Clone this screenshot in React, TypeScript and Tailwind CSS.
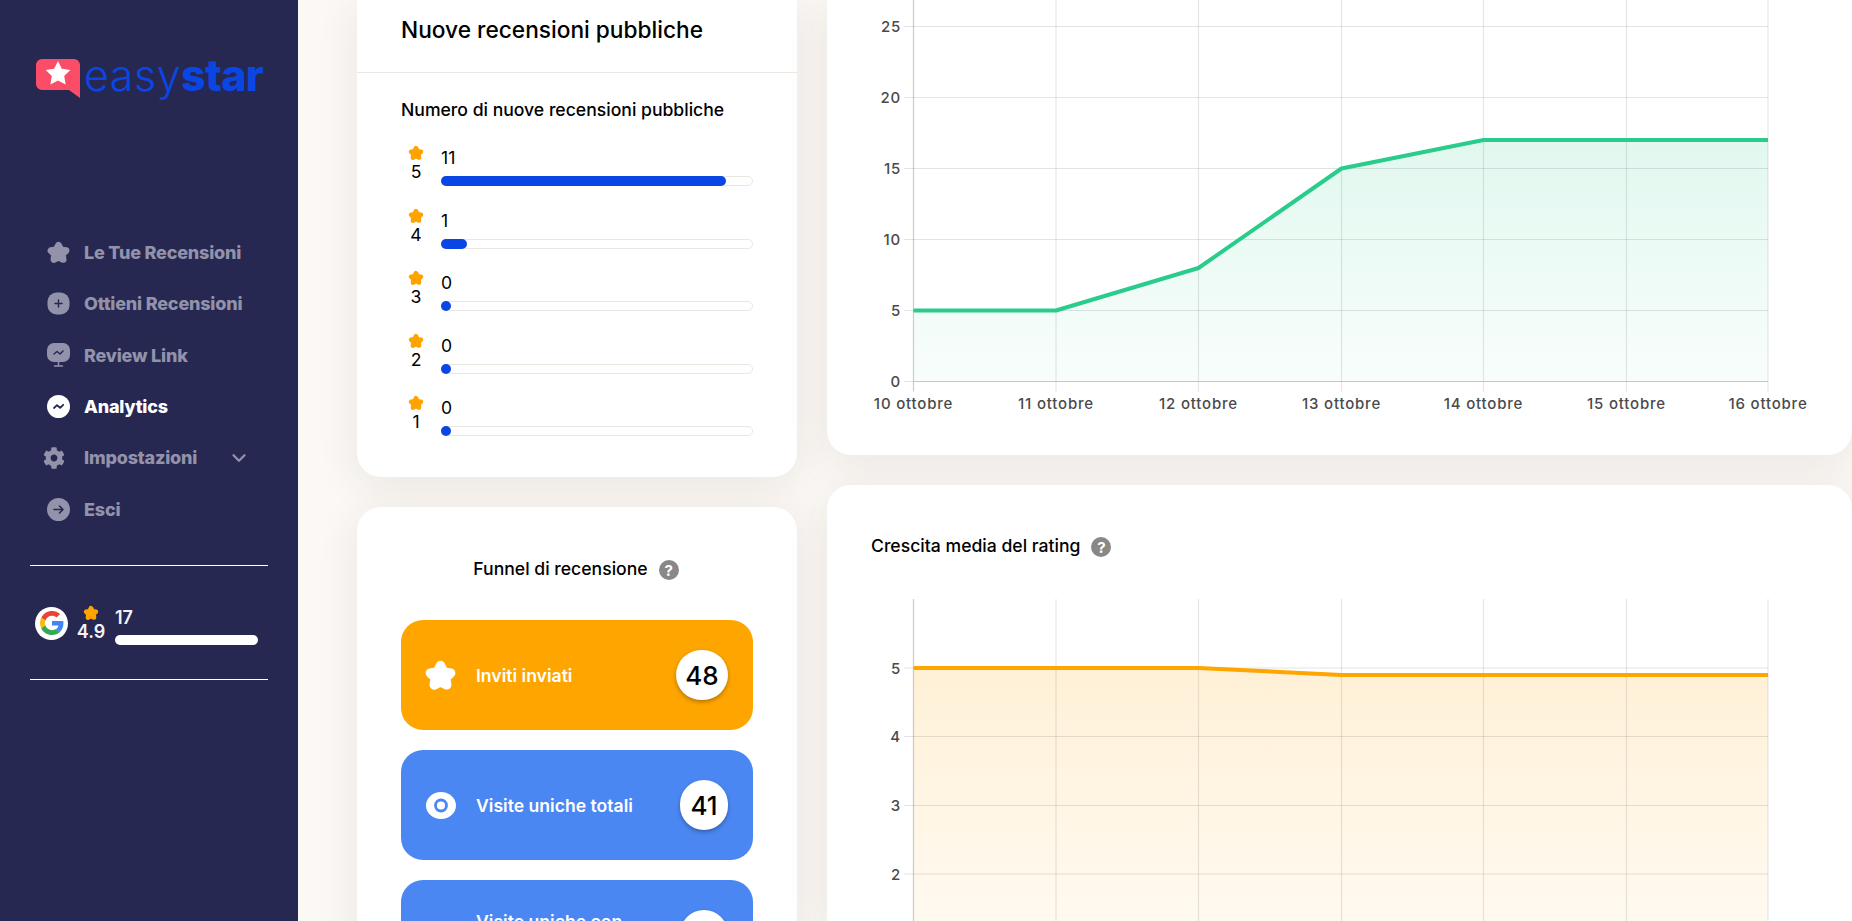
import { ChevronDown } from "lucide-react";
import { FaCog } from "react-icons/fa";

const FONT = "font-['Inter','Liberation_Sans',sans-serif]";

const ratings = [
  { star: 5, count: 11, width: "w-[92%]" },
  { star: 4, count: 1, width: "w-[8.4%]" },
  { star: 3, count: 0, width: "w-[10px]" },
  { star: 2, count: 0, width: "w-[10px]" },
  { star: 1, count: 0, width: "w-[10px]" },
];

const days = ["10 ottobre", "11 ottobre", "12 ottobre", "13 ottobre", "14 ottobre", "15 ottobre", "16 ottobre"];
const gridX = [86.5, 229, 371.5, 514.5, 656.5, 799.5, 941];

function RoundStar({ className }: { className?: string }) {
  return (
    <svg viewBox="0 0 24 24" className={className} fill="currentColor" stroke="currentColor" strokeWidth={6} strokeLinejoin="round" aria-hidden="true">
      <path d="M12 5.500L14.120 9.590L18.660 10.340L15.420 13.610L16.110 18.160L12 16.100L7.890 18.160L8.580 13.610L5.340 10.340L9.880 9.590z" />
    </svg>
  );
}

function HelpDot() {
  return (
    <span className="mt-[3px] flex h-[20px] w-[20px] items-center justify-center rounded-full bg-[#888888] text-[15px] font-bold leading-none text-white">
      ?
    </span>
  );
}

function Logo() {
  return (
    <div className="flex items-start pl-[36px] pt-[59px]">
      <svg viewBox="0 0 44 39" className="h-[39px] w-[44px] shrink-0" aria-hidden="true">
        <path d="M6 0h32a6 6 0 0 1 6 6v33L33 31H6a6 6 0 0 1-6-6V6a6 6 0 0 1 6-6z" fill="#fb4d68" />
        <path d="M22 2L25.820 9.740L34.360 10.980L28.180 17L29.640 25.520L22 21.500L14.360 25.520L15.820 17L9.640 10.980L18.180 9.740z" fill="#ffffff" />
      </svg>
      <span className={`-mt-[4px] ml-[4px] text-[43px] leading-[40px] text-[#0a46e4] ${FONT}`}>
        <span className="font-light tracking-[0.5px]">easy</span>
        <span className="font-extrabold tracking-[-0.6px]">star</span>
      </span>
    </div>
  );
}

function NavItem({ icon, label, active, extra }: { icon: React.ReactNode; label: string; active?: boolean; extra?: React.ReactNode }) {
  return (
    <div className={`flex h-[51.3px] items-center pl-[47px] text-[18px] font-extrabold tracking-[-0.2px] ${active ? "text-white" : "text-[#9292aa]"}`}>
      <span className="flex w-[37px] shrink-0 items-center">{icon}</span>
      <span>{label}</span>
      {extra}
    </div>
  );
}

function Sidebar() {
  return (
    <aside className={`flex w-[298px] shrink-0 flex-col bg-[#272851] ${FONT}`}>
      <Logo />
      <nav className="mt-[129px] flex flex-col">
        <NavItem label="Le Tue Recensioni" icon={<RoundStar className="-ml-[2px] h-[27px] w-[27px] text-[#9292aa]" />} />
        <NavItem
          label="Ottieni Recensioni"
          icon={
            <svg viewBox="0 0 23 23" className="h-[23px] w-[23px]" aria-hidden="true">
              <rect x="0.500" y="0.500" width="22" height="22" rx="9" fill="#9292aa" />
              <path d="M11.500 8v7M8 11.500h7" stroke="#272851" strokeWidth="1.500" strokeLinecap="round" />
            </svg>
          }
        />
        <NavItem
          label="Review Link"
          icon={
            <svg viewBox="0 0 23 24" className="h-[24px] w-[23px]" aria-hidden="true">
              <path d="M7 0h9a7 7 0 0 1 7 7v5a7 7 0 0 1-7 7H7a7 7 0 0 1-7-7V7a7 7 0 0 1 7-7z" fill="#9292aa" />
              <path d="M11.500 19v4M7.500 23h8" stroke="#9292aa" strokeWidth="1.500" strokeLinecap="round" />
              <path d="M7 11l3-2.500 3 2.500 3-3" fill="none" stroke="#272851" strokeWidth="1.500" strokeLinecap="round" strokeLinejoin="round" />
            </svg>
          }
        />
        <NavItem
          label="Analytics"
          active
          icon={
            <svg viewBox="0 0 23 23" className="h-[23px] w-[23px]" aria-hidden="true">
              <circle cx="11.500" cy="11.500" r="11.500" fill="#ffffff" />
              <path d="M7 13l3-2.800 3.200 2.600 3-3" fill="none" stroke="#272851" strokeWidth="1.800" strokeLinecap="round" strokeLinejoin="round" />
            </svg>
          }
        />
        <NavItem
          label="Impostazioni"
          icon={<FaCog className="-ml-[4px] h-[22px] w-[22px] text-[#9292aa]" />}
          extra={<ChevronDown className="ml-[31px] h-[22px] w-[22px] text-[#9292aa]" strokeWidth={2.500} />}
        />
        <NavItem
          label="Esci"
          icon={
            <svg viewBox="0 0 23 23" className="h-[23px] w-[23px]" aria-hidden="true">
              <circle cx="11.500" cy="11.500" r="11.500" fill="#9292aa" />
              <path d="M7 11.500h9M12.500 8l3.500 3.500-3.500 3.500" fill="none" stroke="#272851" strokeWidth="1.600" strokeLinecap="round" strokeLinejoin="round" />
            </svg>
          }
        />
      </nav>
      <div className="mx-[30px] mt-[30px] flex h-[115px] flex-col justify-center border-y border-white">
        <div className="flex items-center pt-[2px]">
          <span className="ml-[5px] flex h-[33px] w-[33px] items-center justify-center rounded-full bg-white">
            <svg viewBox="0 0 48 48" className="h-[24px] w-[24px]" aria-hidden="true">
              <path fill="#ea4335" d="M24 9.500c3.500 0 6.700 1.200 9.200 3.600l6.900-6.900C35.900 2.400 30.500 0 24 0 14.600 0 6.500 5.400 2.600 13.200l8 6.200C12.400 13.700 17.700 9.500 24 9.500z" />
              <path fill="#4285f4" d="M46.900 24.500c0-1.600-.1-3.100-.4-4.500H24v9h12.900c-.6 3-2.200 5.500-4.800 7.200l7.700 6c4.500-4.200 7.100-10.300 7.100-17.700z" />
              <path fill="#fbbc05" d="M10.500 28.600c-.5-1.400-.8-3-.8-4.600s.3-3.200.8-4.600l-8-6.200C.9 16.400 0 20.100 0 24s.9 7.600 2.600 10.800z" />
              <path fill="#34a853" d="M24 48c6.500 0 11.900-2.100 15.900-5.800l-7.700-6c-2.200 1.500-5 2.300-8.200 2.300-6.300 0-11.600-4.200-13.500-9.900l-8 6.200C6.500 42.600 14.600 48 24 48z" />
            </svg>
          </span>
          <div className="ml-[9px] flex w-[28px] flex-col items-center">
            <RoundStar className="h-[18px] w-[18px] text-[#ffa300]" />
            <span className="-mt-[1px] text-[18px] font-semibold leading-[22px] text-[#f2f2f6]">4.9</span>
          </div>
          <div className="ml-[10px] mt-[6px] flex w-[143px] flex-col">
            <span className="text-[18px] font-semibold leading-[20px] text-[#f2f2f6]">17</span>
            <span className="mt-[7px] h-[10px] rounded-full bg-white" />
          </div>
        </div>
      </div>
    </aside>
  );
}

function RatingRow({ star, count, width }: { star: number; count: number; width: string }) {
  return (
    <div className="flex h-[62.5px] text-[17.6px] leading-[20px] text-black">
      <div className="flex w-[40px] shrink-0 flex-col items-center pr-[10px]">
        <RoundStar className="-mt-[1px] h-[18px] w-[18px] text-[#ffa300]" />
        <span>{star}</span>
      </div>
      <div className="flex-1 pt-[3px]">
        <div>{count}</div>
        <div className="mt-[8px] h-[10px] w-full rounded-full border border-[#ebe6e0] bg-white">
          <div className={`-m-px h-[10px] rounded-full bg-[#0a46e4] ${width}`} />
        </div>
      </div>
    </div>
  );
}

function FunnelRow({ color, icon, label, value, circle }: { color: string; icon: React.ReactNode; label: string; value?: string; circle: string }) {
  return (
    <div className={`flex h-[110px] shrink-0 items-center rounded-[22px] pl-[25px] pr-[25px] ${color}`}>
      <span className="flex w-[50px] shrink-0">{icon}</span>
      <span className="flex-1 text-[17.6px] font-semibold leading-[27px] text-white">{label}</span>
      <span className={`flex h-[50px] shrink-0 items-center justify-center rounded-full bg-white text-[26px] font-medium text-black shadow-[0_2px_4px_rgba(0,0,0,0.3)] ${circle}`}>
        {value}
      </span>
    </div>
  );
}

function LeftColumn() {
  return (
    <div className="flex w-[440px] shrink-0 flex-col gap-[30px]">
      <section className="rounded-b-[24px] bg-white pb-[19.5px] shadow-[0_8px_40px_rgba(90,70,50,0.1)]">
        <h2 className="flex h-[73px] items-center border-b border-[#ece7e2] pb-[12px] pl-[44px] text-[22.7px] font-medium text-black">
          Nuove recensioni pubbliche
        </h2>
        <div className="px-[44px]">
          <h3 className="mt-[26px] text-[17.6px] font-medium leading-[22px] text-black">Numero di nuove recensioni pubbliche</h3>
          <div className="mt-[24px]">
            {ratings.map((r) => (
              <RatingRow key={r.star} {...r} />
            ))}
          </div>
        </div>
      </section>
      <section className="flex flex-1 flex-col rounded-t-[24px] bg-white px-[44px] pt-[50px] shadow-[0_8px_40px_rgba(90,70,50,0.1)]">
        <div className="flex items-center justify-center gap-[11px] pr-[2px] text-[17.6px] font-medium leading-[22px] text-black">
          <span>Funnel di recensione</span>
          <HelpDot />
        </div>
        <div className="mt-[40px] flex flex-col gap-[20px]">
          <FunnelRow
            color="bg-[#ffa500]"
            label="Inviti inviati"
            value="48"
            circle="w-[52px]"
            icon={<RoundStar className="-ml-[4px] h-[37px] w-[37px] text-white" />}
          />
          <FunnelRow
            color="bg-[#4b87f3]"
            label="Visite uniche totali"
            value="41"
            circle="w-[48px]"
            icon={
              <svg viewBox="0 0 30 27" className="h-[27px] w-[30px]" aria-hidden="true">
                <ellipse cx="15" cy="13.500" rx="15" ry="13.500" fill="#ffffff" />
                <circle cx="15" cy="13.500" r="5.500" fill="none" stroke="#4b87f3" strokeWidth="2.800" />
              </svg>
            }
          />
          <FunnelRow color="bg-[#4b87f3]" label="Visite uniche con recensione" circle="w-[48px]" icon={<span />} />
        </div>
      </section>
    </div>
  );
}

function Chart({
  height,
  ticks,
  line,
  stroke,
  fillId,
  fillColor,
  fillTop,
  fillBottom,
  baseline,
  showDates,
}: {
  height: number;
  ticks: { label: string; y: number }[];
  line: number[];
  stroke: string;
  fillId: string;
  fillColor: string;
  fillTop: number;
  fillBottom: number;
  baseline: number;
  showDates: boolean;
}) {
  const points = line.map((y, i) => `${gridX[i]},${y}`).join(" ");
  const area = `${gridX[0]},${baseline} ${points} ${gridX[6]},${baseline}`;
  const lastGrid = showDates ? baseline + 10 : height;
  return (
    <svg width={1025} height={height} className="block" style={{ fontFamily: "Inter, sans-serif" }}>
      <defs>
        <linearGradient id={fillId} x1="0" y1="0" x2="0" y2="1">
          <stop offset="0" stopColor={fillColor} stopOpacity={fillTop} />
          <stop offset="1" stopColor={fillColor} stopOpacity={fillBottom} />
        </linearGradient>
      </defs>
      <polygon points={area} fill={`url(#${fillId})`} />
      {ticks.map((t) => (
        <g key={t.label}>
          <line x1={77} x2={gridX[6]} y1={t.y} y2={t.y} stroke="#5a5a60" strokeOpacity={0.17} strokeWidth={1} />
          <text x={74} y={t.y + 5.500} textAnchor="end" fontSize={15} fontWeight={500} letterSpacing={0.8} fill="#4a4a4c">
            {t.label}
          </text>
        </g>
      ))}
      {gridX.map((x, i) => (
        <line key={x} x1={x} x2={x} y1={0} y2={lastGrid} stroke="#5a5a60" strokeOpacity={i === 0 ? 0.3 : 0.15} strokeWidth={1.200} />
      ))}
      {showDates && <line x1={gridX[0]} x2={gridX[6]} y1={baseline} y2={baseline} stroke="#c4c4c6" strokeWidth={1} />}
      <polyline points={points} fill="none" stroke={stroke} strokeWidth={4} strokeLinejoin="round" />
      {showDates &&
        days.map((d, i) => (
          <text key={d} x={gridX[i]} y={409} textAnchor="middle" fontSize={15} fontWeight={500} letterSpacing={0.8} fill="#4a4a4c">
            {d}
          </text>
        ))}
    </svg>
  );
}

function RightColumn() {
  return (
    <div className="flex min-w-0 flex-1 flex-col gap-[30px]">
      <section className="h-[455px] shrink-0 overflow-hidden rounded-b-[24px] bg-white shadow-[0_8px_40px_rgba(90,70,50,0.1)]">
        <Chart
          height={455}
          baseline={381.500}
          showDates
          stroke="#29cc8b"
          fillId="green"
          fillColor="#29cc8b"
          fillTop={0.14}
          fillBottom={0.03}
          ticks={[
            { label: "25", y: 26.500 },
            { label: "20", y: 97.500 },
            { label: "15", y: 168.500 },
            { label: "10", y: 239.500 },
            { label: "5", y: 310.500 },
            { label: "0", y: 381.500 },
          ]}
          line={[310.500, 310.500, 268, 168.500, 140, 140, 140]}
        />
      </section>
      <section className="flex flex-1 flex-col rounded-t-[24px] bg-white shadow-[0_8px_40px_rgba(90,70,50,0.1)]">
        <div className="flex items-center gap-[11px] pl-[44px] pt-[49px] text-[17.6px] font-medium leading-[22px] text-black">
          <span>Crescita media del rating</span>
          <HelpDot />
        </div>
        <div className="mt-[42px]">
          <Chart
            height={322}
            baseline={344}
            showDates={false}
            stroke="#ffa500"
            fillId="orange"
            fillColor="#ffa500"
            fillTop={0.16}
            fillBottom={0.05}
            ticks={[
              { label: "5", y: 69 },
              { label: "4", y: 137.500 },
              { label: "3", y: 206.500 },
              { label: "2", y: 275 },
            ]}
            line={[69, 69, 69, 76, 76, 76, 76]}
          />
        </div>
      </section>
    </div>
  );
}

export default function App() {
  return (
    <div className={`flex h-[921px] w-[1852px] overflow-hidden bg-[#fbf8f5] ${FONT}`}>
      <Sidebar />
      <main className="flex min-w-0 flex-1 gap-[30px] pl-[59px]">
        <LeftColumn />
        <RightColumn />
      </main>
    </div>
  );
}
